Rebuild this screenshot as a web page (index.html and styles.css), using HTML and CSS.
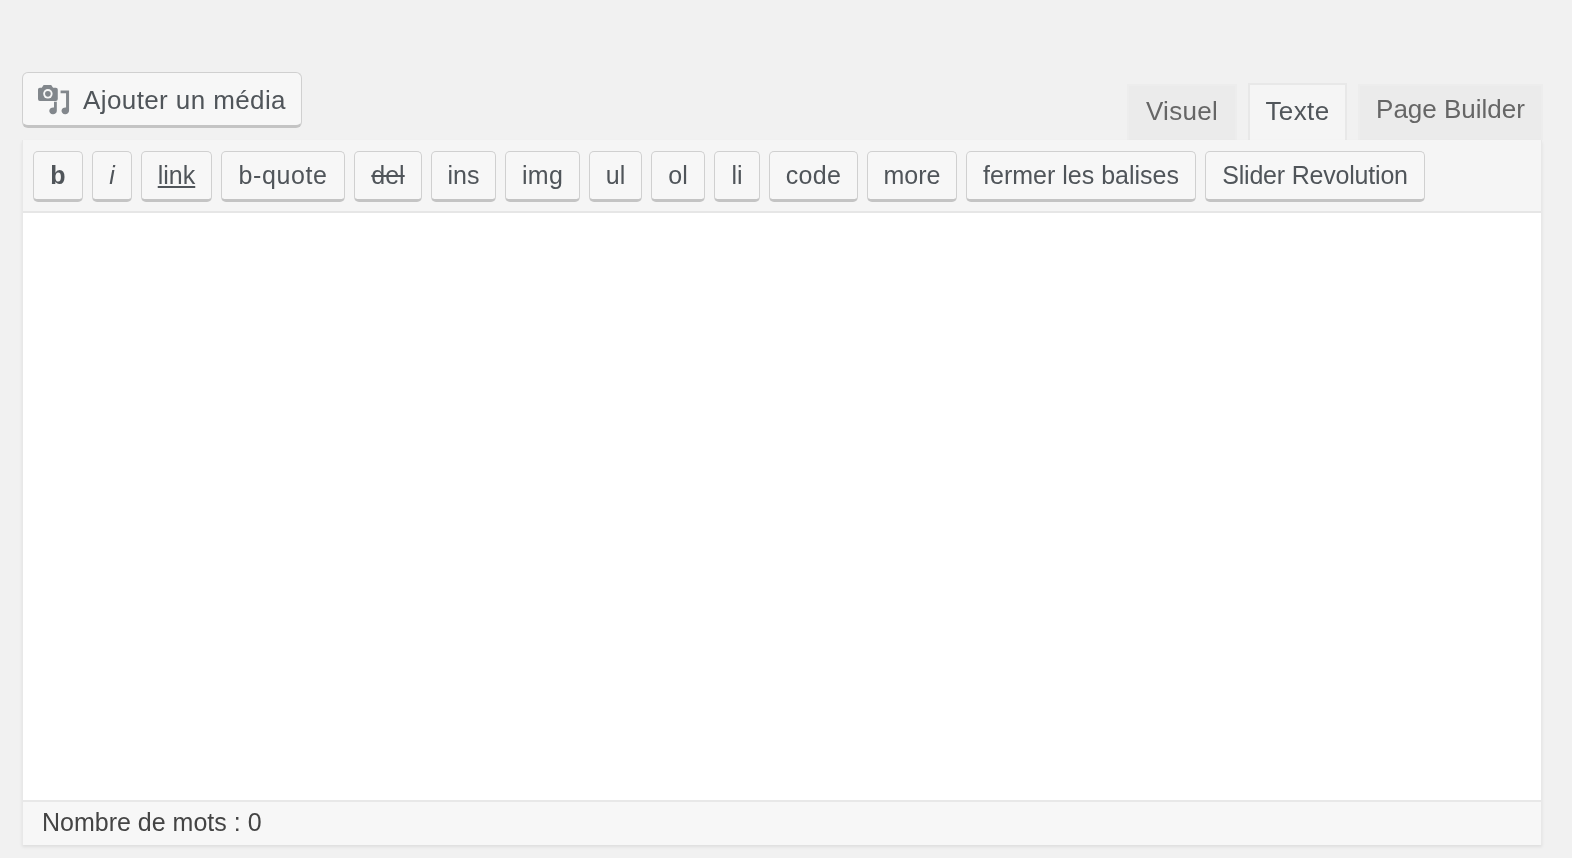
FILE: index.html
```html
<!DOCTYPE html>
<html lang="fr">
<head>
<meta charset="utf-8">
<title>Éditeur</title>
<link rel="stylesheet" href="styles.css">
</head>
<body>
<div class="editor">
  <div class="head">
    <button class="media">
      <svg class="media-icon" viewBox="0 0 34 34" width="32" height="32" aria-hidden="true">
        <path fill="#82878c" d="M6 2h8l2 3h3a2 2 0 0 1 2 2v10a2 2 0 0 1-2 2H2a2 2 0 0 1-2-2V7a2 2 0 0 1 2-2h2z"/>
        <circle cx="10.500" cy="11.500" r="5" fill="#f7f7f7"/>
        <circle cx="10.500" cy="11.500" r="3" fill="#82878c"/>
        <path fill="#82878c" d="M24 8h9v21.500a4 3.600 0 1 1-3.200-3.500V11h-5.800z"/>
        <path fill="#82878c" d="M17 20h3v9.500a4 3.600 0 1 1-3-3.400z"/>
      </svg>
      <span class="media-label">Ajouter un média</span>
    </button>
    <div class="tabs">
      <div class="tab tab-visuel">Visuel</div>
      <div class="tab tab-active">Texte</div>
      <div class="tab tab-builder">Page Builder</div>
    </div>
  </div>
  <div class="frame">
    <div class="toolbar">
      <button class="qt qt-b">b</button>
      <button class="qt qt-i">i</button>
      <button class="qt qt-link">link</button>
      <button class="qt qt-quote">b-quote</button>
      <button class="qt qt-del">del</button>
      <button class="qt qt-ins">ins</button>
      <button class="qt qt-img">img</button>
      <button class="qt qt-ul">ul</button>
      <button class="qt qt-ol">ol</button>
      <button class="qt qt-li">li</button>
      <button class="qt qt-code">code</button>
      <button class="qt qt-more">more</button>
      <button class="qt qt-close">fermer les balises</button>
      <button class="qt qt-slider">Slider Revolution</button>
    </div>
    <div class="content"></div>
    <div class="status">Nombre de mots : 0</div>
  </div>
</div>
</body>
</html>
```

FILE: styles.css
```css
html, body {
  margin: 0;
  height: 100%;
  background: #f1f1f1;
  overflow: hidden;
}
.editor {
  display: flex;
  flex-direction: column;
  padding: 72px 30px 0 22px;
  font-family: "Liberation Sans", Arial, sans-serif;
  font-size: 26px;
  color: #555d66;
  filter: blur(0.6px);
}
.head {
  display: flex;
  justify-content: space-between;
  align-items: flex-end;
  height: 68px;
}
button {
  font: inherit;
  color: inherit;
  margin: 0;
}
.media {
  display: flex;
  align-items: center;
  gap: 13px;
  height: 56px;
  width: 280px;
  padding: 0 0 0 15px;
  margin-bottom: 12px;
  background: #f7f7f7;
  border: 1.500px solid #d0d0d0;
  border-bottom: 3px solid #c4c4c4;
  border-radius: 6px;
  color: #50555a;
}
.media-icon {
  flex: none;
}
.media-label {
  letter-spacing: 0.4px;
  padding-top: 2px;
}
.tabs {
  display: flex;
  gap: 11px;
  align-items: flex-end;
  height: 57px;
  margin-right: -1px;
}
.tab {
  display: flex;
  align-items: center;
  justify-content: center;
  height: 56px;
  padding-bottom: 3px;
  background: #ebebeb;
  border: 2px solid #ededed;
  border-bottom: 0;
  box-sizing: border-box;
  color: #666666;
}
.tab-visuel { width: 110px; letter-spacing: 0.3px; }
.tab-builder { width: 185px; padding-bottom: 7px; }
.tab-active {
  width: 99px;
  height: 57px;
  background: #f5f5f5;
  border-color: #e8e8e8;
  color: #50555a;
  letter-spacing: 0.4px;
}
.frame {
  display: flex;
  flex-direction: column;
  height: 705px;
  border-left: 1px solid #e8e8e8;
  border-right: 1px solid #e8e8e8;
  box-shadow: 0 2px 3px rgba(0, 0, 0, 0.08);
}
.toolbar {
  display: flex;
  gap: 9px;
  height: 73px;
  box-sizing: border-box;
  padding: 11px 0 0 10px;
  background: #f5f5f5;
  border-bottom: 2px solid #e6e6e6;
}
.qt {
  height: 51px;
  padding: 0 0 1px;
  background: #f7f7f7;
  border: 1.500px solid #d0d0d0;
  border-bottom: 3px solid #c4c4c4;
  border-radius: 5px;
  font-size: 25px;
  color: #50555a;
  white-space: nowrap;
}
.qt-b { font-weight: 700; width: 50px; }
.qt-i { font-style: italic; width: 40px; }
.qt-link { text-decoration: underline; width: 71px; }
.qt-quote { width: 124px; letter-spacing: 0.6px; }
.qt-del { text-decoration: line-through; width: 68px; }
.qt-ins { width: 65px; }
.qt-img { width: 75px; letter-spacing: 0.3px; }
.qt-ul { width: 53px; }
.qt-ol { width: 54px; }
.qt-li { width: 46px; }
.qt-code { width: 89px; letter-spacing: 0.3px; }
.qt-more { width: 90px; }
.qt-close { width: 230px; }
.qt-slider { width: 220px; letter-spacing: -0.2px; }
.content {
  flex: 1;
  background: #ffffff;
}
.status {
  height: 45px;
  box-sizing: border-box;
  padding: 0 0 3px 19px;
  display: flex;
  align-items: center;
  background: #f7f7f7;
  border-top: 2px solid #e8e8e8;
  color: #444444;
  font-size: 25px;
}
```
